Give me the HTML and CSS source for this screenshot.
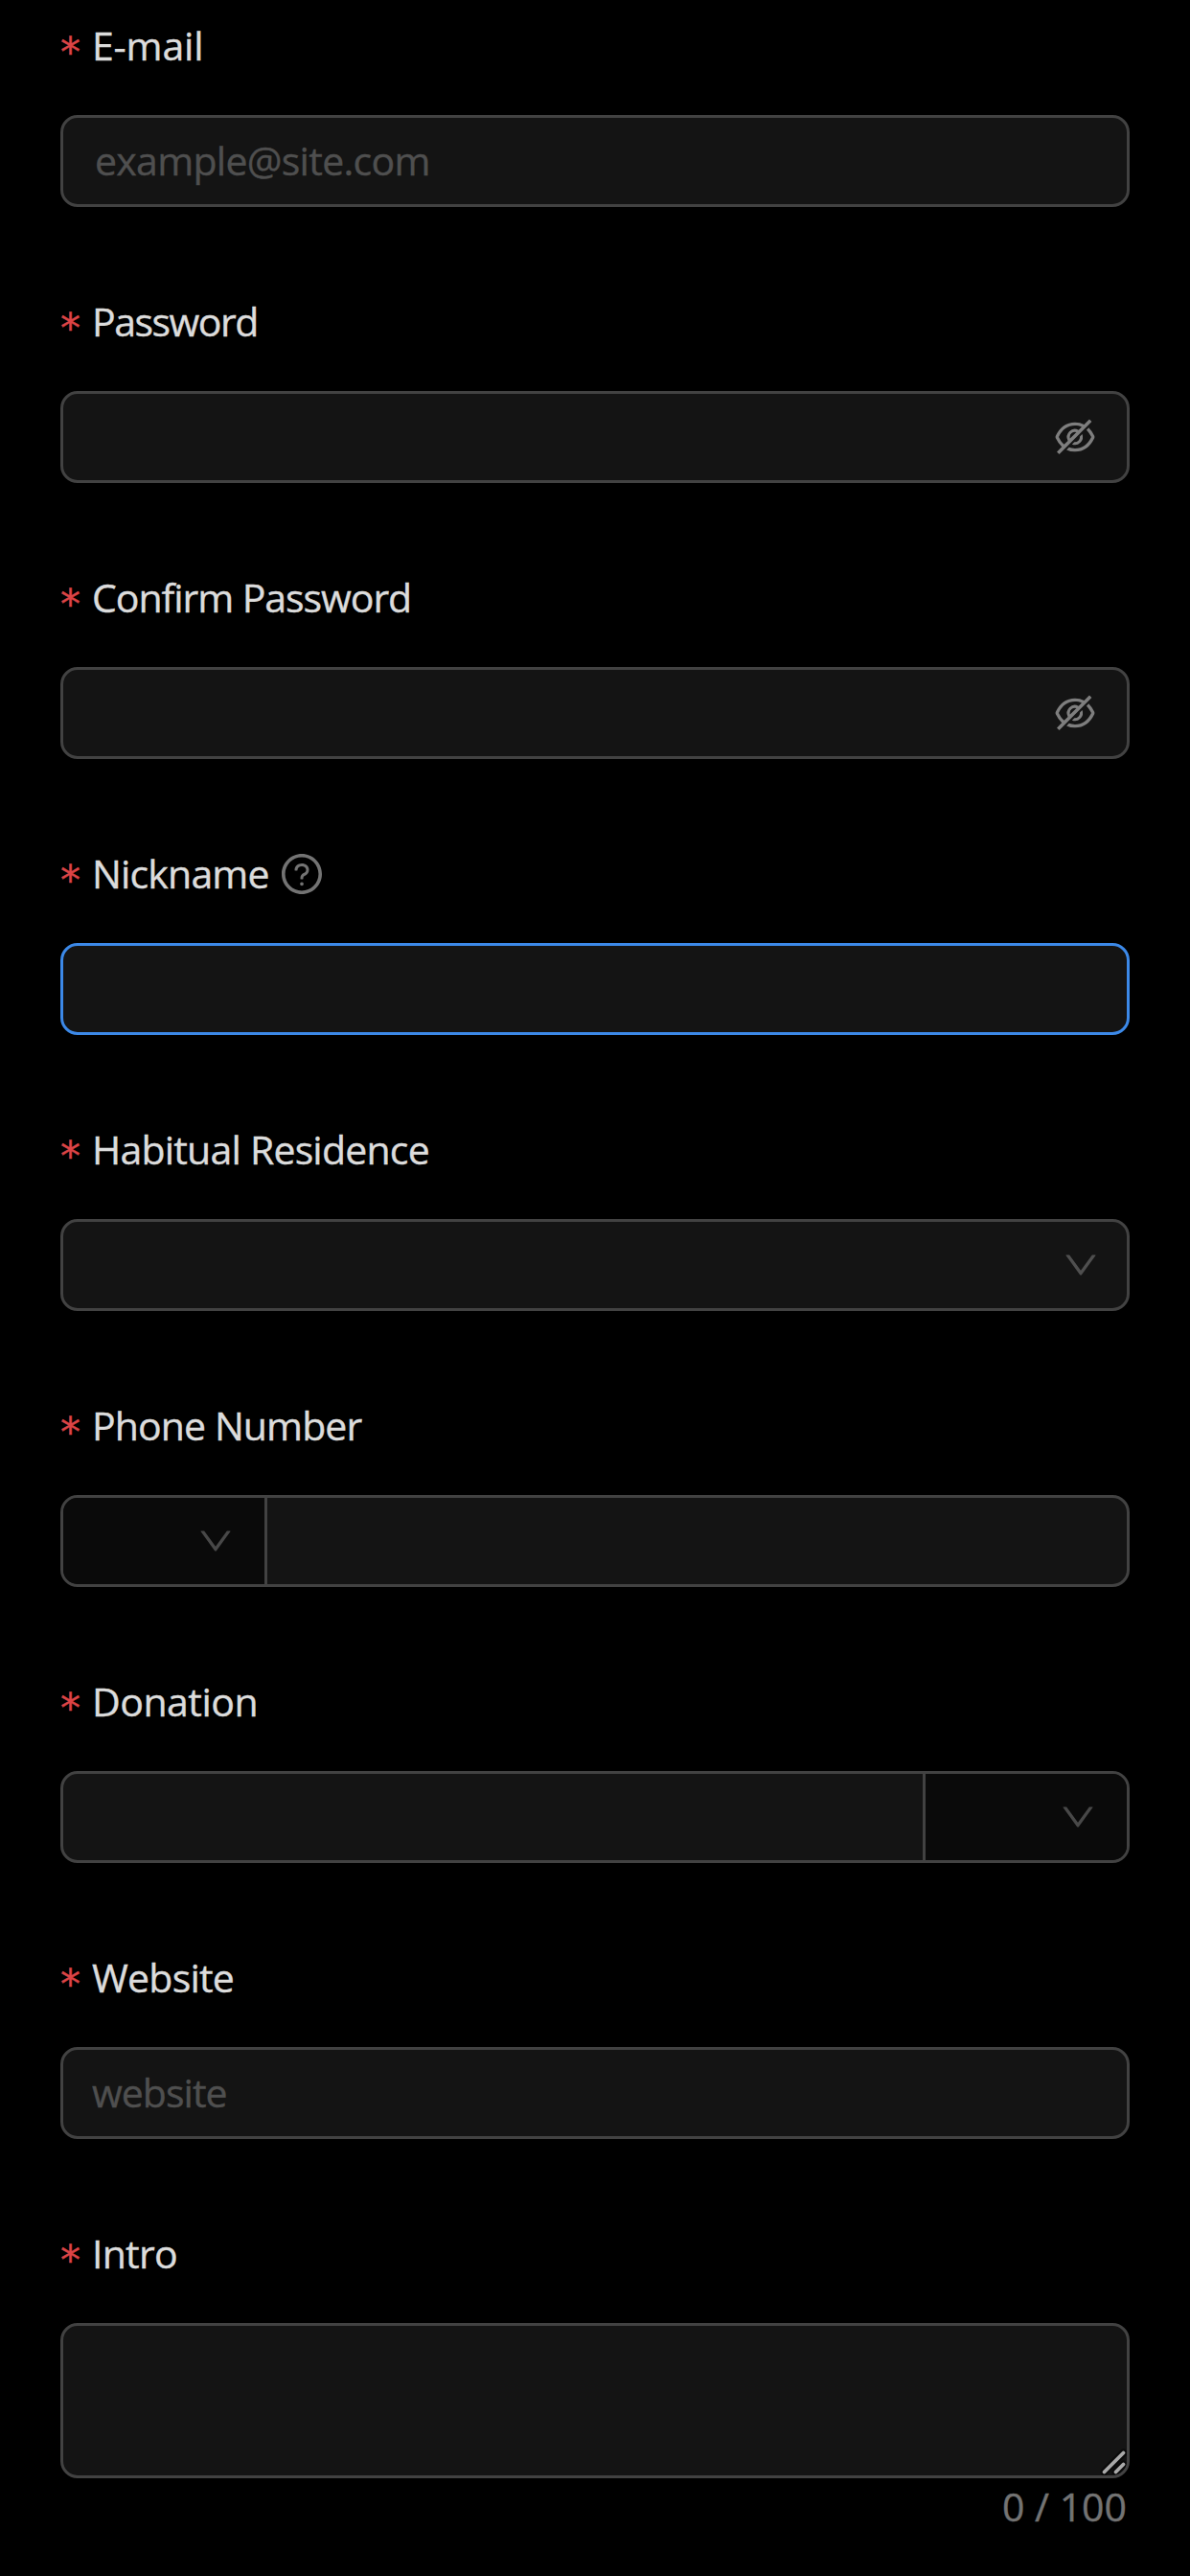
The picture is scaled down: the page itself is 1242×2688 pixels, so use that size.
FILE: index.html
```html
<!DOCTYPE html>
<html lang="en">
<head>
<meta charset="utf-8">
<title>Register</title>
<link rel="stylesheet" href="styles.css">
</head>
<body>
<svg class="sprite" aria-hidden="true">
  <symbol id="eye-off" viewBox="0 0 1024 1024">
    <path d="M942.2 486.2Q889.47 375.11 816.7 305l-50.88 50.88C807.31 395.53 843.45 447.4 874.7 512 791.5 684.2 673.4 766 512 766q-72.67 0-133.87-22.38L323 798.75Q408 838 512 838q288.3 0 430.2-300.3a60.29 60.29 0 000-51.5zm-63.57-320.64L836 122.88a8 8 0 00-11.32 0L715.31 232.2Q624.86 186 512 186q-288.3 0-430.2 300.3a60.3 60.3 0 000 51.5q56.69 119.4 136.5 191.41L112.48 835a8 8 0 000 11.31L155.17 889a8 8 0 0011.31 0l712.15-712.12a8 8 0 000-11.32zM149.3 512C232.6 339.8 350.7 258 512 258c54.54 0 104.13 9.36 149.12 28.39l-70.3 70.3a176 176 0 00-238.13 238.13l-83.42 83.42C223.1 637.49 183.3 582.28 149.3 512zm246.7 0a112.11 112.11 0 01146.2-106.69L401.31 546.2A112 112 0 01396 512z"/>
    <path d="M508 624c-3.46 0-6.87-.16-10.25-.47l-52.82 52.82a176.09 176.09 0 00227.42-227.42l-52.82 52.82c.31 3.38.47 6.79.47 10.25a111.94 111.94 0 01-112 112z"/>
  </symbol>
  <symbol id="question" viewBox="0 0 1024 1024">
    <path d="M512 64C264.6 64 64 264.6 64 512s200.6 448 448 448 448-200.6 448-448S759.4 64 512 64zm0 820c-205.4 0-372-166.6-372-372s166.6-372 372-372 372 166.6 372 372-166.6 372-372 372z"/>
    <path d="M623.6 316.7C593.6 290.4 554 276 512 276s-81.6 14.5-111.6 40.7C369.2 344 352 380.7 352 420v7.6c0 4.4 3.6 8 8 8h48c4.4 0 8-3.6 8-8V420c0-44.1 43.1-80 96-80s96 35.9 96 80c0 31.1-22 59.6-56.1 72.7-21.2 8.1-39.2 22.3-52.1 40.9-13.1 19-19.9 41.8-19.9 64.9V620c0 4.4 3.6 8 8 8h48c4.4 0 8-3.6 8-8v-22.7a48.3 48.3 0 0130.9-44.8c59-22.7 97.1-74.7 97.1-132.5.1-39.3-17.1-76-48.3-103.3zM472 732a40 40 0 1080 0 40 40 0 10-80 0z"/>
  </symbol>
  <symbol id="down" viewBox="0 0 1024 1024">
    <path d="M884 256h-75c-5.1 0-9.9 2.5-12.9 6.6L512 654.2 227.9 262.6c-3-4.1-7.8-6.6-12.9-6.6h-75c-6.5 0-10.3 7.4-6.5 12.7l352.6 486.1c12.8 17.6 39 17.6 51.7 0l352.6-486.1c3.9-5.3.1-12.7-6.4-12.7z"/>
  </symbol>
</svg>

<form class="form">
  <div class="item">
    <label class="label" for="email"><span class="star">*</span><span class="t-email">E-mail</span></label>
    <div class="field field-email"><input class="input ph-email" id="email" type="text" placeholder="example@site.com"></div>
  </div>
  <div class="item">
    <label class="label" for="password"><span class="star">*</span><span class="t-password">Password</span></label>
    <div class="field"><input class="input" id="password" type="password"><svg class="eye"><use href="#eye-off"/></svg></div>
  </div>
  <div class="item">
    <label class="label" for="confirm"><span class="star">*</span><span class="t-confirm">Confirm Password</span></label>
    <div class="field"><input class="input" id="confirm" type="password"><svg class="eye"><use href="#eye-off"/></svg></div>
  </div>
  <div class="item">
    <label class="label" for="nickname"><span class="star">*</span><span class="t-nickname">Nickname</span><svg class="question"><use href="#question"/></svg></label>
    <div class="field active"><input class="input" id="nickname" type="text"></div>
  </div>
  <div class="item">
    <label class="label" for="residence"><span class="star">*</span><span class="t-residence">Habitual Residence</span></label>
    <div class="field field-select"><input class="input" id="residence" type="text"><svg class="down"><use href="#down"/></svg></div>
  </div>
  <div class="item">
    <label class="label" for="phone"><span class="star">*</span><span class="t-phone">Phone Number</span></label>
    <div class="field group">
      <span class="addon addon-before"><svg class="down"><use href="#down"/></svg></span>
      <input class="input" id="phone" type="text">
    </div>
  </div>
  <div class="item">
    <label class="label" for="donation"><span class="star">*</span><span class="t-donation">Donation</span></label>
    <div class="field group">
      <input class="input" id="donation" type="text">
      <span class="addon addon-after"><svg class="down"><use href="#down"/></svg></span>
    </div>
  </div>
  <div class="item">
    <label class="label" for="website"><span class="star">*</span><span class="t-website">Website</span></label>
    <div class="field"><input class="input ph-website" id="website" type="text" placeholder="website"></div>
  </div>
  <div class="item">
    <label class="label" for="intro"><span class="star">*</span><span class="t-intro">Intro</span></label>
    <div class="field area">
      <textarea class="input" id="intro"></textarea>
      <svg class="grip" viewBox="0 0 30 30">
        <path class="grip-shade" d="M6.5 26.5l20-20M18.5 26.5l8-8"/>
        <path class="grip-line" d="M6.5 26.5l20-20M18.5 26.5l8-8"/>
      </svg>
    </div>
    <div class="count">0 / 100</div>
  </div>
</form>
</body>
</html>
```
FILE: styles.css
```css
* {
  box-sizing: border-box;
}

body {
  margin: 0;
  background: #000;
  color: #dcdcdc;
  font-family: "Open Sans", "Noto Sans", sans-serif;
  font-size: 41px;
  line-height: 66px;
  -webkit-text-stroke-width: 0.4px;
}

.sprite {
  display: none;
}

svg {
  display: block;
  flex: none;
  fill: currentColor;
}

.form {
  display: flex;
  flex-direction: column;
  gap: 86px;
  height: 2688px;
  padding: 14px 63px 0;
  overflow: hidden;
}

.item {
  display: flex;
  flex-direction: column;
}

.label {
  display: flex;
  height: 66px;
  margin-bottom: 40px;
  white-space: nowrap;
}

.star {
  width: 21px;
  margin: 8px 12px 0 0;
  color: #dc4446;
  font-family: "DejaVu Sans", sans-serif;
  font-size: 42px;
}

.t-email { letter-spacing: -0.18px; }
.t-password { letter-spacing: -1.5px; }
.t-confirm { letter-spacing: -1.05px; }
.t-nickname { width: 195px; letter-spacing: -0.83px; }
.t-residence { letter-spacing: -0.79px; }
.t-phone { letter-spacing: -0.9px; }
.t-donation { letter-spacing: -0.5px; }
.t-website { letter-spacing: -0.77px; }
.t-intro { letter-spacing: -0.77px; }

.question {
  width: 48px;
  height: 48px;
  margin-top: 10px;
  color: #737373;
}

.field {
  display: flex;
  align-items: center;
  height: 96px;
  padding: 0 30px;
  border: 3px solid #424242;
  border-radius: 18px;
  background: #141414;
  overflow: hidden;
}

.field-email {
  padding-left: 33px;
}

.active {
  border-color: #3c89e8;
}

.field-select {
  padding-right: 27px;
}

.input {
  flex: 1;
  min-width: 0;
  height: 66px;
  padding: 0 0 2px;
  border: 0;
  outline: 0;
  background: transparent;
  color: #dcdcdc;
  font: inherit;
  resize: none;
}

.input::placeholder {
  color: #4f4f4f;
  opacity: 1;
}

.ph-email { letter-spacing: -0.71px; }
.ph-website { letter-spacing: -0.97px; }

.eye {
  width: 48px;
  height: 48px;
  color: #7e7e7e;
}

.down {
  width: 42px;
  height: 42px;
  color: #4f4f4f;
}

.group {
  padding: 0;
}

.group .input {
  padding: 0 33px;
}

.addon {
  display: flex;
  align-items: center;
  justify-content: flex-end;
  height: 100%;
  padding-right: 30px;
  background: #0a0a0a;
}

.addon .down {
  color: #484848;
}

.addon-before {
  width: 213px;
  border-right: 3px solid #424242;
}

.addon-after {
  width: 213px;
  border-left: 3px solid #424242;
}

.area {
  position: relative;
  height: 162px;
}

.area .input {
  height: 132px;
}

.grip {
  position: absolute;
  right: 0;
  bottom: 0;
  width: 30px;
  height: 30px;
  fill: none;
  stroke-linecap: round;
}

.grip-shade {
  stroke: #0a0a0a;
  stroke-width: 8;
}

.grip-line {
  stroke: #a9a9a9;
  stroke-width: 3.8;
}

.count {
  height: 66px;
  margin-top: -4px;
  padding-right: 3px;
  color: #737373;
  text-align: right;
}
```
